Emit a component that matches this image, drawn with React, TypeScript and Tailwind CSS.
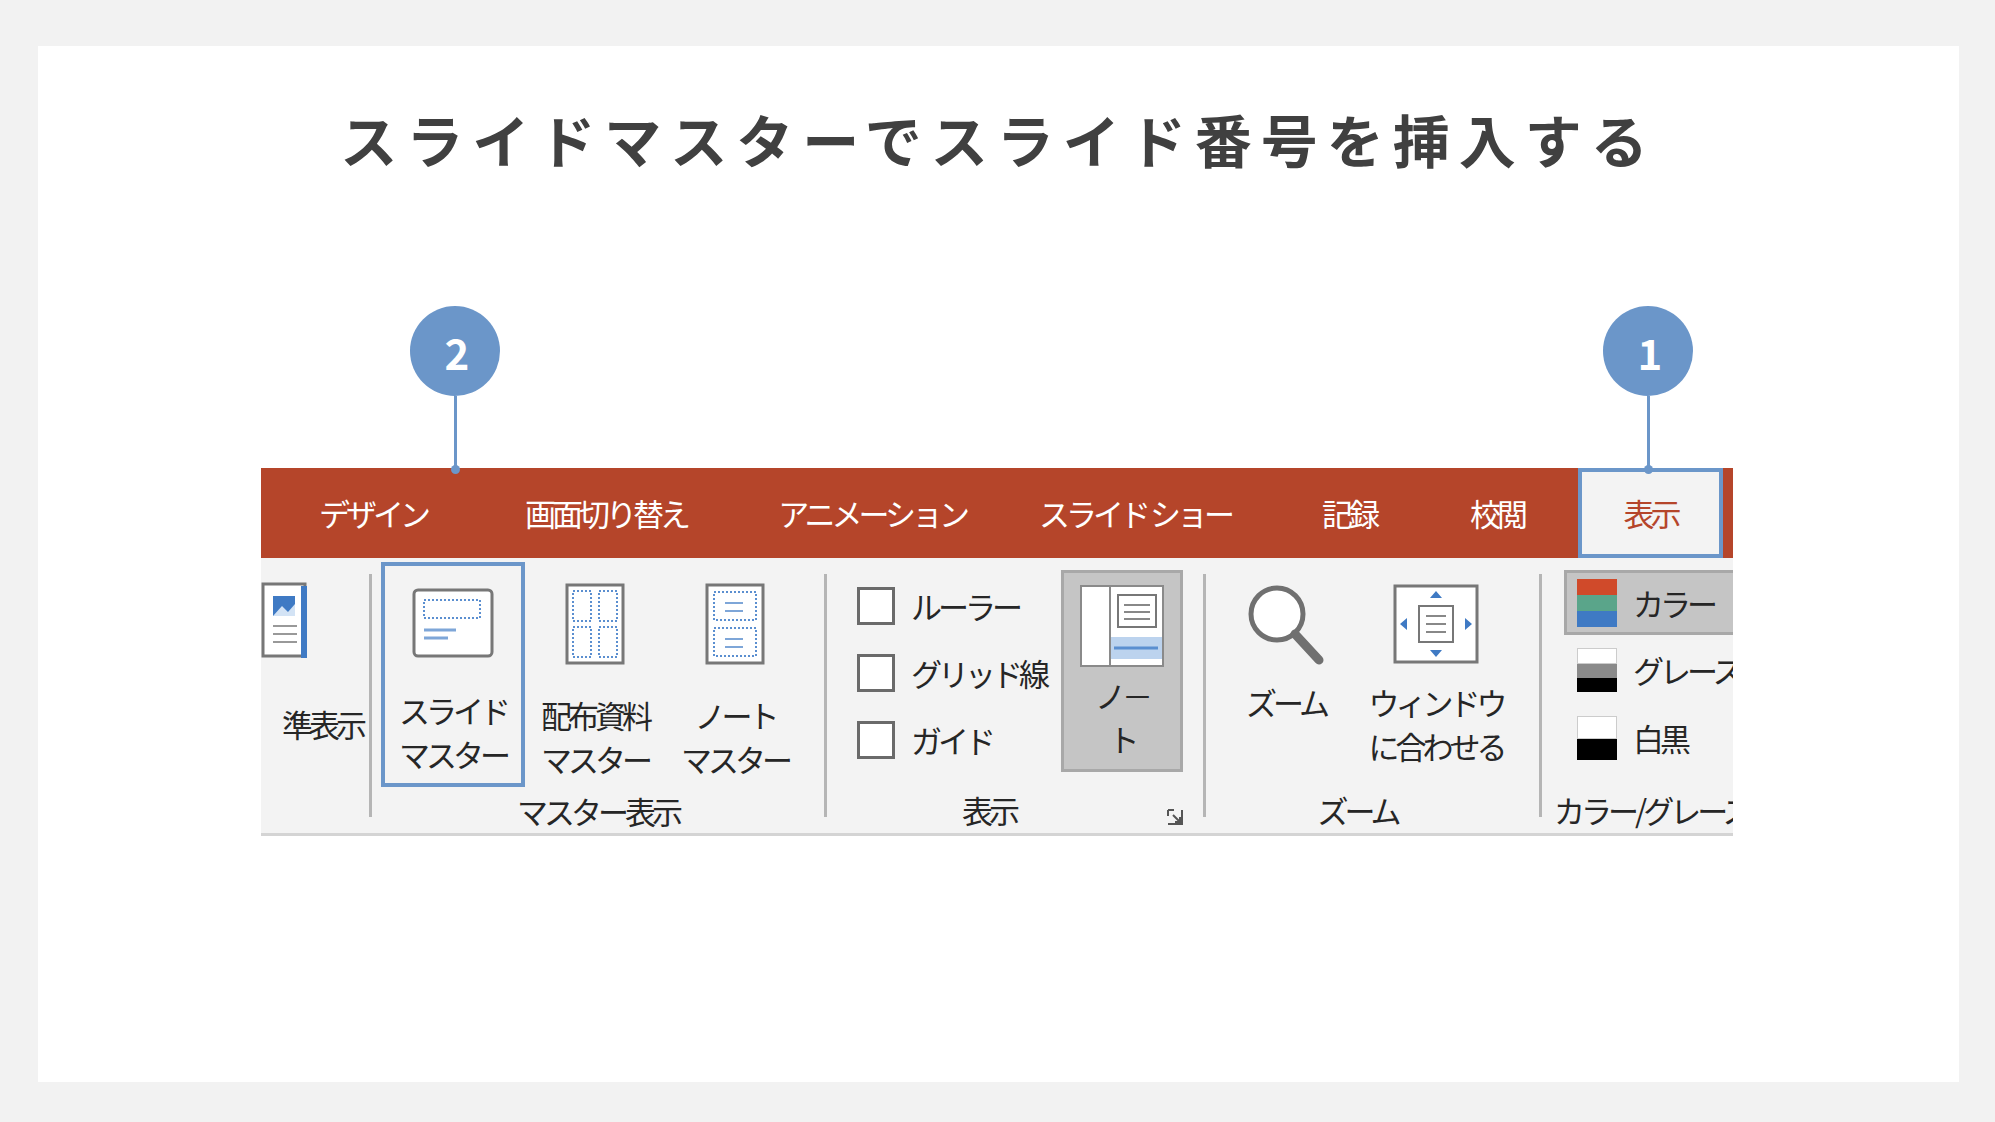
import React from 'react';

const font = { fontFamily: '"Noto Sans CJK JP", "Noto Sans", sans-serif' };

const tabs: [string, number, number][] = [
  ['デザイン', 52, 120],
  ['画面切り替え', 83, 180],
  ['アニメーション', 86, 180],
  ['スライド ショー', 83, 180],
  ['記録', 74, 100],
  ['校閲', 48, 100],
];

function Badge({ n, x }: { n: string; x: number }) {
  return (
    <div className="absolute top-[-162px] flex flex-col items-center" style={{ left: x - 45 }}>
      <div className="w-[90px] h-[90px] rounded-full bg-[#6b96c9] flex items-center justify-center text-white text-[42px] font-bold">{n}</div>
      <div className="w-[3px] bg-[#6b96c9] h-[74px]" />
      <div className="w-[9px] h-[9px] -mt-[5px] rounded-full bg-[#6b96c9]" />
    </div>
  );
}

function Sep() {
  return <div className="w-[3px] self-stretch my-[16px] bg-[#b5b5b5] shrink-0" />;
}

function Check({ label }: { label: string }) {
  return (
    <div className="flex items-center gap-[16px] h-[67px]">
      <div className="w-[38px] h-[38px] shrink-0 border-[3px] border-[#6a6a6a] bg-white" />
      <span>{label}</span>
    </div>
  );
}

function Dots({ x, y, w, h }: { x: number; y: number; w: number; h: number }) {
  return <rect x={x} y={y} width={w} height={h} fill="none" stroke="#5b8fd0" strokeWidth="2" strokeDasharray="2 2" />;
}

export default function App() {
  return (
    <div className="min-h-screen bg-[#f2f2f2] pt-[46px] pl-[38px]" style={font}>
      <div className="w-[1921px] h-[1036px] bg-white flex flex-col items-center">
        <h1 className="mt-[58px] text-[57px] tracking-[9px] font-bold text-[#404040] leading-[68px]">スライドマスターでスライド番号を挿入する</h1>
        <div className="relative mt-[296px] ml-[223px] self-start w-[1472px] text-[#262626] text-[31px] tracking-[-4px]">
          <Badge n="2" x={194} />
          <Badge n="1" x={1387} />
          <div className="h-[90px] bg-[#b5452a] flex items-stretch text-white">
            {tabs.map(([t, ml, w]) => (
              <div key={t} className="flex items-center justify-center whitespace-nowrap" style={{ marginLeft: ml, width: w }}>{t}</div>
            ))}
            <div className="ml-[31px] w-[145px] bg-[#f3f3f3] border-[4px] border-[#6b96c9] flex items-center justify-center text-[#b5452a]">表示</div>
          </div>
          <div className="h-[278px] bg-[#f3f3f3] border-b-[3px] border-[#d4d4d4] flex overflow-hidden leading-[44px]">
            {/* partial group */}
            <div className="w-[108px] shrink-0 flex flex-col items-end pt-[24px] overflow-hidden">
              <svg width="50" height="78" viewBox="0 0 50 78" className="mr-[60px]">
                <rect x="4" y="2" width="42" height="72" fill="#fff" stroke="#777" strokeWidth="3" />
                <rect x="42" y="4" width="6" height="72" fill="#3f7ac4" />
                <rect x="14" y="14" width="22" height="20" fill="#3f7ac4" />
                <path d="M14 34l9-10 6 6 7-8v12z" fill="#d3e3f5" />
                <path d="M14 44h24M14 52h24M14 60h24" stroke="#999" strokeWidth="2" />
              </svg>
              <div className="mt-[42px] whitespace-nowrap mr-[6px]">準表示</div>
            </div>
            <Sep />
            {/* master group */}
            <div className="w-[452px] shrink-0 flex flex-col">
              <div className="flex items-start pt-[4px] h-[236px]">
                <div className="ml-[9px] w-[144px] h-[225px] border-[4px] border-[#6b96c9] flex flex-col items-center">
                  <svg width="82" height="72" viewBox="0 0 82 72" className="mt-[22px]">
                    <rect x="2" y="2" width="78" height="66" rx="4" fill="#fff" stroke="#777" strokeWidth="3" />
                    <Dots x={12} y={12} w={56} h={18} />
                    <path d="M12 42h32M12 50h24" stroke="#7ea6d8" strokeWidth="3" />
                  </svg>
                  <div className="mt-[28px] text-center">スライド<br />マスター</div>
                </div>
                <div className="w-[140px] flex flex-col items-center pt-[21px]">
                  <svg width="60" height="82" viewBox="0 0 60 82">
                    <rect x="2" y="2" width="56" height="78" fill="#fff" stroke="#777" strokeWidth="3" />
                    <Dots x={8} y={8} w={18} h={30} />
                    <Dots x={34} y={8} w={18} h={30} />
                    <Dots x={8} y={44} w={18} h={30} />
                    <Dots x={34} y={44} w={18} h={30} />
                  </svg>
                  <div className="mt-[28px] text-center whitespace-nowrap">配布資料<br />マスター</div>
                </div>
                <div className="w-[140px] flex flex-col items-center pt-[21px]">
                  <svg width="60" height="82" viewBox="0 0 60 82">
                    <rect x="2" y="2" width="56" height="78" fill="#fff" stroke="#777" strokeWidth="3" />
                    <Dots x={9} y={9} w={42} h={28} />
                    <Dots x={9} y={45} w={42} h={28} />
                    <path d="M20 20h18M20 28h18M20 56h18M20 64h18" stroke="#7ea6d8" strokeWidth="2" />
                  </svg>
                  <div className="mt-[28px] text-center whitespace-nowrap">ノート<br />マスター</div>
                </div>
              </div>
              <div className="text-center">マスター表示</div>
            </div>
            <Sep />
            {/* show group */}
            <div className="w-[376px] shrink-0 flex flex-col">
              <div className="flex h-[230px]">
                <div className="ml-[30px] pt-[14px] w-[200px] whitespace-nowrap">
                  <Check label="ルーラー" />
                  <Check label="グリッド線" />
                  <Check label="ガイド" />
                </div>
                <div className="ml-[4px] mt-[12px] w-[122px] h-[202px] bg-[#c5c5c5] border-[3px] border-[#a8a8a8] flex flex-col items-center">
                  <svg width="84" height="82" viewBox="0 0 84 82" className="mt-[12px]">
                    <rect x="1" y="1" width="82" height="80" fill="#fff" stroke="#8a8a8a" strokeWidth="2" />
                    <path d="M30 1v80" stroke="#8a8a8a" strokeWidth="2" />
                    <rect x="38" y="10" width="38" height="32" fill="#fff" stroke="#777" strokeWidth="2" />
                    <path d="M44 20h26M44 27h26M44 34h26" stroke="#888" strokeWidth="2" />
                    <rect x="31" y="52" width="51" height="22" fill="#bcd3ee" />
                    <path d="M34 63h44" stroke="#5b8fd0" strokeWidth="3" />
                  </svg>
                  <div className="mt-[6px] text-center">ノ－<br />ト</div>
                </div>
              </div>
              <div className="flex items-end">
                <div className="ml-[135px]">表示</div>
                <svg width="18" height="18" viewBox="0 0 18 18" className="ml-[150px] mb-[6px]">
                  <path d="M2 2h6M2 2v6M2 16h14V2M7 7l7 7M14 9v5H9" stroke="#555" strokeWidth="2" fill="none" />
                </svg>
              </div>
            </div>
            <Sep />
            {/* zoom group */}
            <div className="w-[333px] shrink-0 flex flex-col">
              <div className="flex h-[230px]">
                <div className="w-[160px] flex flex-col items-center pt-[24px]">
                  <svg width="82" height="84" viewBox="0 0 82 84">
                    <circle cx="32" cy="32" r="26" fill="#fff" stroke="#707070" strokeWidth="5" />
                    <path d="M50 52l24 26" stroke="#707070" strokeWidth="9" strokeLinecap="round" />
                  </svg>
                  <div className="mt-[14px]">ズーム</div>
                </div>
                <div className="w-[140px] flex flex-col items-center pt-[26px]">
                  <svg width="86" height="80" viewBox="0 0 86 80">
                    <rect x="2" y="2" width="82" height="76" fill="#fff" stroke="#777" strokeWidth="3" />
                    <rect x="26" y="22" width="34" height="36" fill="#fff" stroke="#777" strokeWidth="2" />
                    <path d="M33 32h20M33 40h20M33 48h20" stroke="#888" strokeWidth="2" />
                    <path d="M43 7l6 7h-12zM43 73l6-7h-12zM7 40l7-6v12zM79 40l-7-6v12z" fill="#3f7ac4" />
                  </svg>
                  <div className="mt-[16px] text-center whitespace-nowrap">ウィンドウ<br />に合わせる</div>
                </div>
              </div>
              <div className="text-center mr-[30px]">ズーム</div>
            </div>
            <Sep />
            {/* color group */}
            <div className="flex-1 flex flex-col whitespace-nowrap overflow-hidden">
              <div className="h-[230px] pl-[22px] pt-[12px]">
                <div className="h-[65px] bg-[#c5c5c5] border-[3px] border-[#a8a8a8] border-r-0 flex items-center pl-[10px] gap-[16px]">
                  <div className="w-[40px] h-[48px] shrink-0 flex flex-col">
                    <div className="flex-1 bg-[#d04a2a]" />
                    <div className="flex-1 bg-[#5aa58a]" />
                    <div className="flex-1 bg-[#3f7ac4]" />
                  </div>
                  <span>カラー</span>
                </div>
                <div className="h-[70px] flex items-center pl-[13px] gap-[16px]">
                  <div className="w-[40px] h-[44px] shrink-0 flex flex-col">
                    <div className="flex-1 bg-white border border-[#ccc]" />
                    <div className="flex-1 bg-[#8a8a8a]" />
                    <div className="flex-1 bg-black" />
                  </div>
                  <span>グレースケール</span>
                </div>
                <div className="h-[66px] flex items-center pl-[13px] gap-[16px]">
                  <div className="w-[40px] h-[44px] shrink-0 flex flex-col">
                    <div className="flex-1 bg-white border border-[#ccc]" />
                    <div className="flex-1 bg-black" />
                  </div>
                  <span>白黒</span>
                </div>
              </div>
              <div className="pl-[12px]">カラー/グレースケール</div>
            </div>
          </div>
        </div>
      </div>
    </div>
  );
}
